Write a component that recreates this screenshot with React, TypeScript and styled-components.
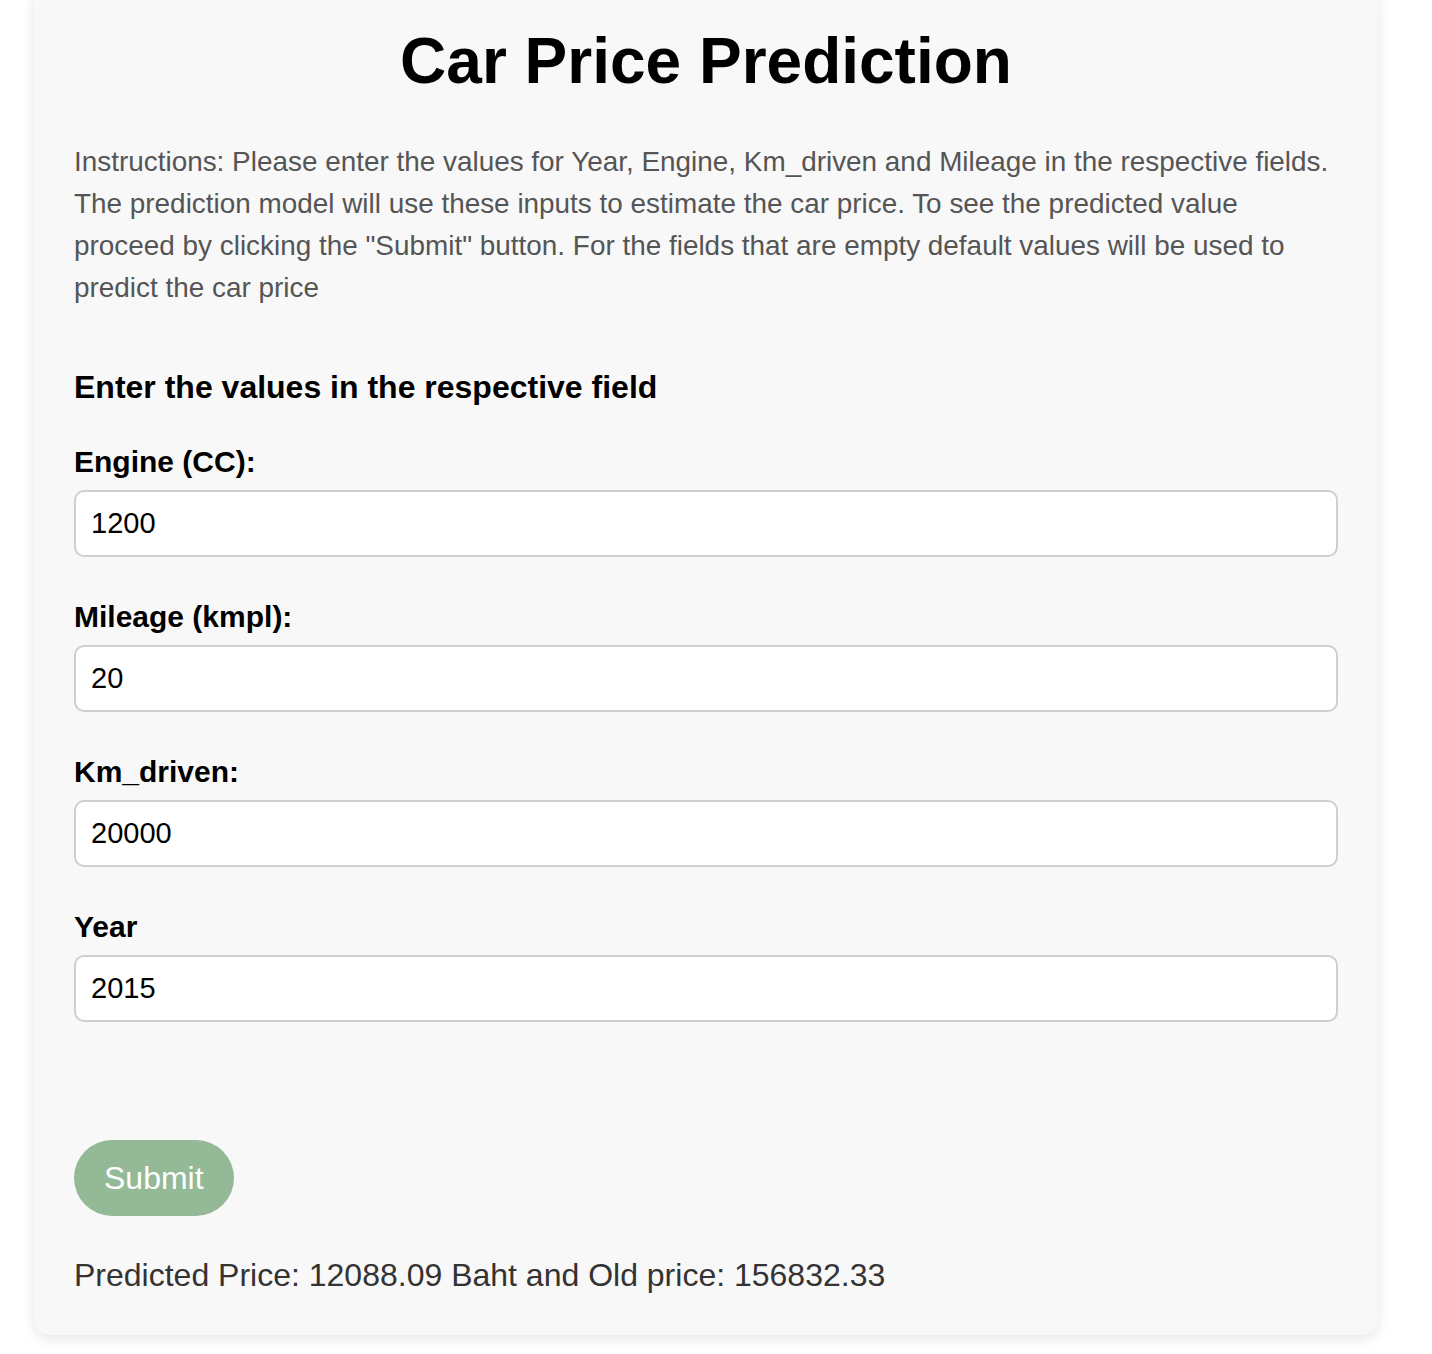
import React from "react";
import styled, { createGlobalStyle } from "styled-components";

const GlobalStyle = createGlobalStyle`
  html, body {
    margin: 0;
    padding: 0;
    background: #ffffff;
  }
  body {
    font-family: "Liberation Sans", Arial, Helvetica, sans-serif;
    overflow: hidden;
  }
  * { box-sizing: border-box; }
`;

const Page = styled.div`
  display: flex;
  padding: 0 0 20px 34px;
`;

const Card = styled.main`
  width: 1344px;
  margin-top: -16px;
  padding: 40px 40px 41px;
  background: #f8f8f8;
  border-radius: 16px;
  box-shadow: 0 4px 14px rgba(0, 0, 0, 0.1);
  display: flex;
  flex-direction: column;
`;

const Title = styled.h1`
  margin: 0;
  font-size: 64px;
  line-height: 74px;
  font-weight: 700;
  color: #000;
  text-align: center;
`;

const Instructions = styled.p`
  margin: 43px 0 0;
  font-size: 27.9px;
  line-height: 42px;
  color: #555555;
`;

const FormHeading = styled.h3`
  margin: 60px 0 0;
  font-size: 32px;
  line-height: 37px;
  font-weight: 700;
  color: #000;
`;

const Form = styled.form`
  display: flex;
  flex-direction: column;
  gap: 42px;
  margin-top: 38px;
`;

const Field = styled.div`
  display: flex;
  flex-direction: column;
  gap: 11px;
`;

const Label = styled.label`
  font-size: 30px;
  line-height: 35px;
  font-weight: 700;
  color: #000;
`;

const Input = styled.input`
  width: 100%;
  height: 67px;
  padding: 0 15px;
  border: 2px solid #cfcfcf;
  border-radius: 10px;
  background: #ffffff;
  font-family: "Liberation Sans", Arial, Helvetica, sans-serif;
  font-size: 29px;
  color: #000;
  outline: none;
`;

const SubmitButton = styled.button`
  align-self: flex-start;
  margin-top: 76px;
  padding: 20px 30px;
  border: none;
  border-radius: 38px;
  background: #93b996;
  color: #ffffff;
  font-family: "Liberation Sans", Arial, Helvetica, sans-serif;
  font-size: 32px;
  line-height: 36px;
  cursor: pointer;
`;

const Result = styled.p`
  margin: 41px 0 0;
  font-size: 32px;
  line-height: 37px;
  color: #333333;
`;

const fields = [
  { id: "engine", label: "Engine (CC):", value: "1200" },
  { id: "mileage", label: "Mileage (kmpl):", value: "20" },
  { id: "km_driven", label: "Km_driven:", value: "20000" },
  { id: "year", label: "Year", value: "2015" },
];

export default function App() {
  return (
    <>
      <GlobalStyle />
      <Page>
        <Card>
          <Title>Car Price Prediction</Title>
          <Instructions>
            Instructions: Please enter the values for Year, Engine, Km_driven and Mileage in the
            respective fields. The prediction model will use these inputs to estimate the car
            price. To see the predicted value proceed by clicking the "Submit" button. For the
            fields that are empty default values will be used to predict the car price
          </Instructions>
          <FormHeading>Enter the values in the respective field</FormHeading>
          <Form onSubmit={(e) => e.preventDefault()}>
            {fields.map((f) => (
              <Field key={f.id}>
                <Label htmlFor={f.id}>{f.label}</Label>
                <Input id={f.id} type="text" defaultValue={f.value} />
              </Field>
            ))}
            <SubmitButton type="submit">Submit</SubmitButton>
          </Form>
          <Result>Predicted Price: 12088.09 Baht and Old price: 156832.33</Result>
        </Card>
      </Page>
    </>
  );
}
